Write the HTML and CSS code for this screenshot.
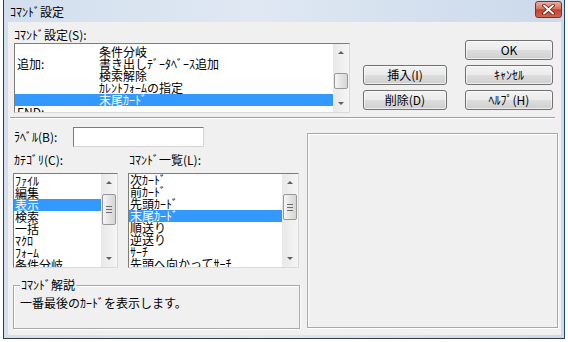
FILE: index.html
```html
<!DOCTYPE html>
<html lang="ja">

<head>
    <meta charset="UTF-8">
    <title>ｺﾏﾝﾄﾞ設定</title>
    <link rel="stylesheet" href="styles.css">
</head>

<body>
    <div class="window">
        <div class="titlebar">
            <span class="title">ｺﾏﾝﾄﾞ設定</span>
            <button class="close" type="button">
                <svg width="13" height="11" viewBox="0 0 13 11">
                    <path d="M2 1.5 L11 9.5 M11 1.5 L2 9.5" stroke="#5a1a12" stroke-width="3.6" stroke-linecap="round" />
                    <path d="M2 1.5 L11 9.5 M11 1.5 L2 9.5" stroke="#ffffff" stroke-width="2" stroke-linecap="round" />
                </svg>
            </button>
        </div>

        <div class="client">
            <div class="top">
                <div class="cmdset">
                    <div class="lbl">ｺﾏﾝﾄﾞ設定(S):</div>
                    <div class="listbox setlist">
                        <div class="items">
                            <div class="row"><span class="c1"></span><span>条件分岐</span></div>
                            <div class="row"><span class="c1">追加:</span><span>書き出しﾃﾞｰﾀﾍﾞｰｽ追加</span></div>
                            <div class="row"><span class="c1"></span><span>検索解除</span></div>
                            <div class="row"><span class="c1"></span><span>ｶﾚﾝﾄﾌｫｰﾑの指定</span></div>
                            <div class="row sel"><span class="c1"></span><span>末尾ｶｰﾄﾞ</span></div>
                            <div class="row"><span class="c1">END:</span><span></span></div>
                        </div>
                        <div class="vscroll">
                            <div class="arrow up"></div>
                            <div class="thumb small"></div>
                            <div class="arrow down"></div>
                        </div>
                    </div>
                </div>

                <div class="btncol mid">
                    <button class="btn" type="button">挿入(I)</button>
                    <button class="btn" type="button">削除(D)</button>
                </div>

                <div class="btncol side">
                    <button class="btn" type="button">OK</button>
                    <button class="btn" type="button">ｷｬﾝｾﾙ</button>
                    <button class="btn" type="button">ﾍﾙﾌﾟ(H)</button>
                </div>
            </div>

            <div class="sep"></div>

            <div class="bottom">
                <div class="leftcol">
                    <div class="labelrow">
                        <span class="lbl">ﾗﾍﾞﾙ(B):</span>
                        <input class="textbox" type="text">
                    </div>

                    <div class="lists">
                        <div class="catcol">
                            <div class="lbl">ｶﾃｺﾞﾘ(C):</div>
                            <div class="listbox catlist">
                                <div class="items">
                                    <div class="row">ﾌｧｲﾙ</div>
                                    <div class="row">編集</div>
                                    <div class="row sel">表示</div>
                                    <div class="row">検索</div>
                                    <div class="row">一括</div>
                                    <div class="row">ﾏｸﾛ</div>
                                    <div class="row">ﾌｫｰﾑ</div>
                                    <div class="row">条件分岐</div>
                                </div>
                                <div class="vscroll">
                                    <div class="arrow up"></div>
                                    <div class="thumb cat"><span class="grip"></span></div>
                                    <div class="arrow down"></div>
                                </div>
                            </div>
                        </div>

                        <div class="cmdcol">
                            <div class="lbl">ｺﾏﾝﾄﾞ一覧(L):</div>
                            <div class="listbox cmdlist">
                                <div class="items">
                                    <div class="row">次ｶｰﾄﾞ</div>
                                    <div class="row">前ｶｰﾄﾞ</div>
                                    <div class="row">先頭ｶｰﾄﾞ</div>
                                    <div class="row sel">末尾ｶｰﾄﾞ</div>
                                    <div class="row">順送り</div>
                                    <div class="row">逆送り</div>
                                    <div class="row">ｻｰﾁ</div>
                                    <div class="row">先頭へ向かってｻｰﾁ</div>
                                </div>
                                <div class="vscroll">
                                    <div class="arrow up"></div>
                                    <div class="thumb cmd"><span class="grip"></span></div>
                                    <div class="arrow down"></div>
                                </div>
                            </div>
                        </div>
                    </div>

                    <div class="desc">
                        <span class="desc-title">ｺﾏﾝﾄﾞ解説</span>
                        <p class="desc-text">一番最後のｶｰﾄﾞを表示します。</p>
                    </div>
                </div>

                <div class="preview"></div>
            </div>
        </div>
    </div>
</body>

</html>
```

FILE: styles.css
```css
body {
    margin: 0;
    background-color: #ffffff;
    font-family: "Noto Sans CJK JP", sans-serif;
    font-size: 12px;
    color: #000000;
    overflow: hidden;
}

.window {
    margin-left: 3px;
    width: 562px;
    height: 339px;
    box-sizing: border-box;
    border-left: 1px solid #3a3a3a;
    border-right: 1px solid #24457c;
    border-bottom: 1px solid #3a3a3a;
    background: linear-gradient(to right, #d3dfee, #dfe8f3 45%, #cbd9ea);
    display: flex;
    flex-direction: column;
}

.titlebar {
    height: 22px;
    flex-shrink: 0;
    display: flex;
    justify-content: space-between;
    align-items: flex-start;
    padding: 0 2px 0 6px;
}

.title {
    line-height: 22px;
    margin-top: 1px;
}

.close {
    width: 27px;
    height: 17px;
    margin-top: 1px;
    padding: 0;
    border: 1px solid #7a3026;
    border-radius: 3px;
    background: linear-gradient(#eab0a2, #d9735f 45%, #c5412f 52%, #d0654f);
    display: flex;
    align-items: center;
    justify-content: center;
}

.client {
    flex: 1;
    margin: 0 3px 3px 4px;
    background-color: #f0f0f0;
    display: flex;
    flex-direction: column;
}

.lbl {
    line-height: 14px;
    white-space: nowrap;
}

/* top part */

.top {
    height: 95px;
    box-sizing: border-box;
    padding-top: 6px;
    display: flex;
}

.cmdset {
    margin-left: 6px;
}

.listbox {
    margin-top: 1px;
    box-sizing: border-box;
    background-color: #ffffff;
    border: 1px solid;
    border-color: #7c7c7c #dadada #dadada #7c7c7c;
    display: flex;
    overflow: hidden;
}

.items {
    flex: 1;
    overflow: hidden;
}

.row {
    height: 12px;
    line-height: 12px;
    white-space: nowrap;
    display: flex;
}

.row.sel {
    background-color: #3399ff;
    color: #ffffff;
}

.setlist {
    width: 336px;
    height: 70px;
}

.setlist .items {
    padding-top: 2px;
}

.setlist .row {
    padding-left: 2px;
}

.c1 {
    width: 82px;
    flex-shrink: 0;
}

.vscroll {
    width: 16px;
    flex-shrink: 0;
    background: linear-gradient(to right, #e8e8e8, #f5f5f5);
    display: flex;
    flex-direction: column;
}

.arrow {
    height: 17px;
    display: flex;
    align-items: center;
    justify-content: center;
}

.arrow::after {
    content: "";
    border-left: 3px solid transparent;
    border-right: 3px solid transparent;
}

.arrow.up::after {
    border-bottom: 3px solid #606060;
}

.arrow.down {
    margin-top: auto;
}

.arrow.down::after {
    border-top: 3px solid #606060;
}

.thumb {
    margin: 0 1px;
    box-sizing: border-box;
    border: 1px solid #979797;
    border-radius: 2px;
    background: linear-gradient(to right, #f6f6f6, #e4e4e4 50%, #d6d6d6);
    display: flex;
    align-items: center;
    justify-content: center;
}

.thumb.small {
    margin-top: 12px;
    height: 16px;
}

.thumb.cat {
    margin-top: 3px;
    height: 31px;
}

.thumb.cmd {
    margin-top: 3px;
    height: 26px;
}

.grip {
    width: 6px;
    height: 5px;
    border-top: 1px solid #6e6e6e;
    border-bottom: 1px solid #6e6e6e;
    background: linear-gradient(#6e6e6e, #6e6e6e) center / 100% 1px no-repeat;
}

.btncol {
    display: flex;
    flex-direction: column;
}

.btncol.mid {
    margin-left: 13px;
    padding-top: 37px;
    gap: 5px;
}

.btncol.side {
    margin-left: 18px;
    padding-top: 12px;
    gap: 5px;
}

.btn {
    height: 20px;
    padding: 0;
    font-family: inherit;
    font-size: 12px;
    line-height: 18px;
    color: #000000;
    border: 1px solid #707070;
    border-radius: 3px;
    background: linear-gradient(#f2f2f2, #ebebeb 50%, #dddddd 51%, #cfcfcf);
    box-shadow: inset 0 0 0 1px rgba(255, 255, 255, 0.6);
}

.mid .btn {
    width: 84px;
}

.side .btn {
    width: 88px;
}

.sep {
    height: 1px;
    margin: 0 6px 0 2px;
    background-color: #a0a0a0;
    border-bottom: 1px solid #ffffff;
}

/* bottom part */

.bottom {
    display: flex;
    flex: 1;
}

.leftcol {
    margin-left: 5px;
    width: 287px;
}

.labelrow {
    margin-top: 8px;
    height: 20px;
    display: flex;
    align-items: center;
}

.labelrow .lbl {
    margin-left: 1px;
    width: 59px;
}

.textbox {
    width: 131px;
    height: 20px;
    box-sizing: border-box;
    margin: 0;
    border: 1px solid;
    border-color: #7c7c7c #d5d5d5 #d5d5d5 #7c7c7c;
    background-color: #ffffff;
}

.lists {
    margin-top: 6px;
    display: flex;
    gap: 10px;
}

.lists .lbl {
    margin-left: 1px;
    margin-bottom: 6px;
}

.catlist {
    width: 105px;
    height: 95px;
}

.catlist .items {
    padding-top: 1px;
}

.catlist .row {
    padding-left: 1px;
}

.cmdlist {
    width: 171px;
    height: 95px;
}

.cmdlist .row {
    padding-left: 1px;
}

.desc {
    margin-top: 17px;
    height: 44px;
    box-sizing: border-box;
    border: 1px solid #a9a9a9;
    box-shadow: inset 1px 1px 0 #ffffff, 1px 1px 0 #ffffff;
    padding-left: 6px;
    line-height: 14px;
}

.desc-title {
    display: block;
    width: max-content;
    margin-top: -8px;
    padding: 0 1px;
    background-color: #f0f0f0;
}

.desc-text {
    margin: 4px 0 0 0;
}

.preview {
    margin: 14px 0 0 7px;
    width: 251px;
    height: 195px;
    box-sizing: border-box;
    border: 1px solid #a9a9a9;
    box-shadow: inset 1px 1px 0 #ffffff, 1px 1px 0 #ffffff;
}
```
